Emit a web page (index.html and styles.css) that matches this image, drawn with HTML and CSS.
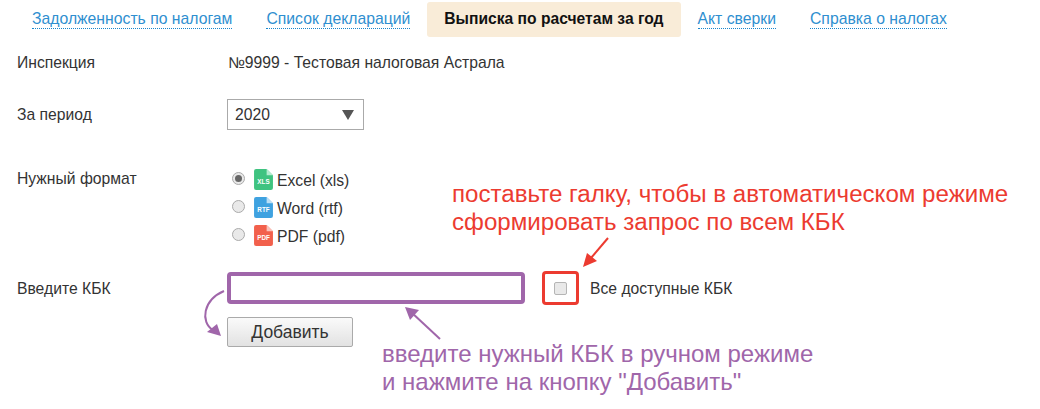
FILE: index.html
```html
<!DOCTYPE html>
<html lang="ru">
<head>
<meta charset="utf-8">
<title>Выписка по расчетам за год</title>
<link rel="stylesheet" href="styles.css">
</head>
<body>
<div class="page">
  <nav class="tabs">
    <a class="tab" href="#"><span>Задолженность по налогам</span></a>
    <a class="tab" href="#"><span>Список деклараций</span></a>
    <a class="tab active" href="#"><span>Выписка по расчетам за год</span></a>
    <a class="tab" href="#"><span>Акт сверки</span></a>
    <a class="tab" href="#"><span>Справка о налогах</span></a>
  </nav>
  <div class="row row-insp">
    <div class="label">Инспекция</div>
    <div class="value">№9999 - Тестовая налоговая Астрала</div>
  </div>
  <div class="row row-period">
    <div class="label">За период</div>
    <div class="select"><span>2020</span><i class="caret"></i></div>
  </div>
  <div class="row row-format">
    <div class="label label-format">Нужный формат</div>
    <div class="formats">
      <div class="fmt"><i class="radio checked"></i>
        <svg class="file" viewBox="0 0 18 20"><path d="M2 0h10l6 6v12a2 2 0 0 1-2 2H2a2 2 0 0 1-2-2V2a2 2 0 0 1 2-2z" fill="#3fc380"/><path d="M12 0l6 6h-6z" fill="#b5ecd0"/><text x="9" y="14" class="ft">XLS</text></svg>
        <span class="fmt-text">Excel (xls)</span></div>
      <div class="fmt"><i class="radio"></i>
        <svg class="file" viewBox="0 0 18 20"><path d="M2 0h10l6 6v12a2 2 0 0 1-2 2H2a2 2 0 0 1-2-2V2a2 2 0 0 1 2-2z" fill="#3fa2e0"/><path d="M12 0l6 6h-6z" fill="#bde0f6"/><text x="9" y="14" class="ft">RTF</text></svg>
        <span class="fmt-text">Word (rtf)</span></div>
      <div class="fmt"><i class="radio"></i>
        <svg class="file" viewBox="0 0 18 20"><path d="M2 0h10l6 6v12a2 2 0 0 1-2 2H2a2 2 0 0 1-2-2V2a2 2 0 0 1 2-2z" fill="#f2604c"/><path d="M12 0l6 6h-6z" fill="#fac2ba"/><text x="9" y="14" class="ft">PDF</text></svg>
        <span class="fmt-text">PDF (pdf)</span></div>
    </div>
  </div>
  <div class="row row-kbk">
    <div class="label label-kbk">Введите КБК</div>
    <div class="kbk-col">
      <div class="kbk-line">
        <div class="kbk-input"></div>
        <div class="check-box"><i class="check"></i></div>
        <span class="check-label">Все доступные КБК</span>
      </div>
      <div class="btn">Добавить</div>
    </div>
  </div>
  <div class="note note-red">поставьте галку, чтобы в автоматическом режиме<br>сформировать запрос по всем КБК</div>
  <div class="note note-purple">введите нужный КБК в ручном режиме<br>и нажмите на кнопку "Добавить"</div>
  <svg class="arrows" viewBox="0 0 1040 409">
    <path d="M608 238 L591 258" fill="none" stroke="#ec3b30" stroke-width="2"/>
    <path d="M583 267 L587 253 L597 261 Z" fill="#ec3b30"/>
    <path d="M440 339 L411 312" fill="none" stroke="#a066aa" stroke-width="2"/>
    <path d="M405 307 L419 310 L410 320 Z" fill="#a066aa"/>
    <path d="M224 291 C203 300 200 322 213 330" fill="none" stroke="#a066aa" stroke-width="2"/>
    <path d="M221 336 L207 332 L217 324 Z" fill="#a066aa"/>
  </svg>
</div>
</body>
</html>
```
FILE: styles.css
```css
* { box-sizing: border-box; }
html, body { margin: 0; padding: 0; background: #fff; }
body { font-family: "Liberation Sans", Arial, sans-serif; color: #333; }
.page { position: relative; width: 1040px; height: 409px; overflow: hidden; }
.tabs { display: flex; padding: 2px 0 0 15px; height: 37px; }
.tab { display: block; height: 35px; padding: 0 17px; line-height: 34px; font-size: 15.75px; text-decoration: none; color: #2f8fd0; }
.tab span { border-bottom: 1px dotted #1a86cc; padding-bottom: 1px; }
.tab.active { background: #f9ecd8; color: #111; font-weight: bold; border-radius: 3px; font-size: 15.65px; }
.tab.active span { border: 0; }
.row { display: flex; padding-left: 17px; font-size: 15.7px; }
.label { width: 211px; flex: none; }
.row-insp { margin-top: 16px; height: 19px; line-height: 19px; }
.row-period { margin-top: 27px; align-items: center; height: 31px; }
.select { width: 137px; height: 31px; margin-left: -1px; border: 1px solid #aaa; display: flex; align-items: center; justify-content: space-between; padding: 0 9px 0 7px; }
.caret { width: 0; height: 0; border-left: 6px solid transparent; border-right: 6px solid transparent; border-top: 10px solid #555; }
.row-format { margin-top: 35px; }
.label-format { padding-top: 5px; line-height: 18px; }
.formats { display: flex; flex-direction: column; padding-left: 4px; }
.fmt { display: flex; align-items: center; height: 28px; }
.radio { width: 13px; height: 13px; border-radius: 50%; border: 1px solid #aaa; background: #e9e9e9; margin: -2px 9px 0 0; position: relative; }
.radio.checked::after { content: ""; position: absolute; left: 2px; top: 2px; width: 7px; height: 7px; border-radius: 50%; background: #666; }
.file { width: 19px; height: 21px; margin-right: 4px; }
.fmt-text { padding-top: 3px; }
.ft { font: bold 6px "Liberation Sans", sans-serif; fill: #fff; text-anchor: middle; }
.row-kbk { margin-top: 22px; }
.label-kbk { padding-top: 9px; line-height: 18px; }
.kbk-col { display: flex; flex-direction: column; margin-left: -1px; }
.kbk-line { display: flex; align-items: center; height: 34px; }
.kbk-input { width: 298px; height: 32px; border: 4px solid #a066aa; border-radius: 4px; }
.check-box { width: 37px; height: 34px; margin-left: 17px; border: 3px solid #ec3b30; border-radius: 4px; display: flex; align-items: center; justify-content: center; }
.check { width: 13px; height: 13px; border: 1px solid #b5b5b5; border-radius: 2px; background: #e9e9e9; }
.check-label { margin-left: 11px; padding-top: 1px; }
.btn { width: 126px; height: 30px; margin-top: 12px; border: 1px solid #aaa; border-radius: 2px; background: linear-gradient(#fafafa, #e2e2e2); text-align: center; line-height: 28px; font-size: 17.5px; }
.note { position: absolute; font-size: 24px; line-height: 28px; }
.note-red { left: 452px; top: 180px; color: #ec3b30; font-size: 24.12px; }
.note-purple { left: 382px; top: 340px; color: #a066aa; }
.arrows { position: absolute; left: 0; top: 0; width: 1040px; height: 409px; pointer-events: none; }
```
